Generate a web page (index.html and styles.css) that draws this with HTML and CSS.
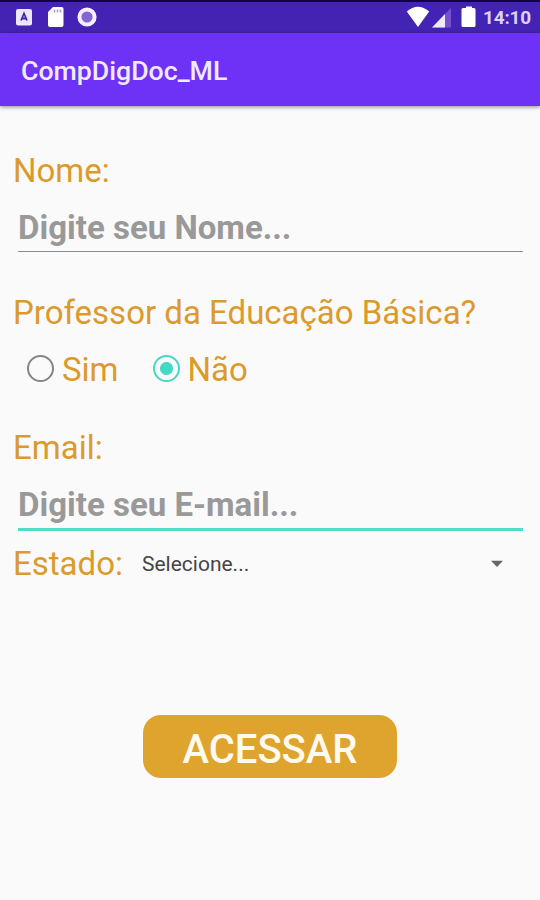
FILE: index.html
```html
<!DOCTYPE html>
<html lang="pt-BR">
<head>
<meta charset="utf-8">
<title>CompDigDoc_ML</title>
<link rel="stylesheet" href="styles.css">
</head>
<body>
<div class="status">
  <svg class="status-icons" width="90" height="30" viewBox="0 0 90 30">
    <rect x="2" y="7" width="16" height="16.500" rx="2" fill="#ece6fa"/>
    <path d="M7 18.500L10 11.500L13 18.500M8 16.500h4" fill="none" stroke="#4424b5" stroke-width="1.800"/>
    <path d="M39 5h8.500q2 0 2 2v16q0 2-2 2H36q-2 0-2-2V10z" fill="#fff"/>
    <path d="M40.500 7.500v3M43.500 7.500v3M46.500 7.500v3" stroke="#a99ad9" stroke-width="1.500"/>
    <circle cx="73" cy="15" r="7.600" fill="#8565d1" stroke="#f5f0ff" stroke-width="4"/>
  </svg>
  <svg class="status-icons" width="70" height="30" viewBox="0 0 70 30">
    <path d="M.8 9.500Q12 0 23.200 9.500L12 25z" fill="#fff"/>
    <path d="M45 6V25.500H26z" fill="#7850cf"/>
    <path d="M39 12V25.500H26z" fill="#efeafa"/>
    <path d="M58 6h2V4.500h6V6h2q1.500 0 1.500 1.500v16q0 1.500-1.500 1.500H57q-1.500 0-1.500-1.500v-16Q55.500 6 57 6z" fill="#fff"/>
  </svg>
  <span class="clock">14:10</span>
</div>
<header class="bar"><span class="title">CompDigDoc_ML</span></header>
<main class="form">
  <label class="label" for="nome">Nome:</label>
  <input class="field" id="nome" placeholder="Digite seu Nome...">
  <div class="label question">Professor da Educação Básica?</div>
  <div class="options">
    <div class="option"><span class="radio"></span><span class="sim">Sim</span></div>
    <div class="option"><span class="radio checked"></span><span class="nao">Não</span></div>
  </div>
  <label class="label email" for="email">Email:</label>
  <input class="field active" id="email" placeholder="Digite seu E-mail...">
  <div class="state">
    <span class="label estado">Estado:</span>
    <span class="selected">Selecione...</span>
    <svg class="arrow" width="14" height="8" viewBox="0 0 14 8"><path d="M1 .7h12L7 7z" fill="#666"/></svg>
  </div>
  <button class="submit"><span class="submit-text">ACESSAR</span></button>
</main>
</body>
</html>
```
FILE: styles.css
```css
* { box-sizing: border-box; }
body {
  margin: 0;
  height: 900px;
  overflow: hidden;
  background: #fafafa;
  font-family: Roboto, sans-serif;
  color: #dc9a2c;
}
.status {
  height: 33px;
  padding: 0 9px 0 14px;
  border-top: 2px solid #12023f;
  background: #4323b4;
  display: flex;
  align-items: flex-start;
}
.status-icons { display: block; flex: none; }
.status-icons + .status-icons { margin-left: 302px; }
.clock {
  margin-left: auto;
  font-size: 19px;
  line-height: 32px;
  font-weight: 700;
  letter-spacing: -0.2px;
  color: #ddd2f6;
  white-space: nowrap;
}
.bar {
  height: 73px;
  padding-left: 21px;
  background: #6d32f6;
  box-shadow: 0 1px 4px rgba(0, 0, 0, .45);
  display: flex;
  align-items: center;
}
.title { font-size: 26.7px; line-height: 32px; font-weight: 500; color: #f1eaff; margin-top: 3px; white-space: nowrap; }
.form { padding: 46px 17px 0 13px; display: flex; flex-direction: column; }
.label { font-size: 33px; line-height: 38px; white-space: nowrap; }
.field {
  height: 44px;
  margin: 18px 0 0 5px;
  padding: 0 0 5px;
  border: 0;
  border-bottom: 1px solid #8c8c8c;
  border-radius: 0;
  outline: 0;
  background: transparent;
  font: bold 33px/38px Roboto, sans-serif;
  color: #999;
}
.field::placeholder { color: #999; opacity: 1; }
.active { height: 46px; border-bottom: 3px solid #58dbc6; }
.question { margin-top: 42px; }
.options { display: flex; margin: 19px 0 0 14px; gap: 34px; font-size: 33px; line-height: 38px; }
.option { display: flex; align-items: center; gap: 8px; }
.radio { width: 27px; height: 27px; border: 2.5px solid #858585; border-radius: 50%; margin-top: -4px; flex: none; }
.checked { border-color: #43d9c3; background: radial-gradient(circle, #43d9c3 6px, transparent 7px); }
.email { margin-top: 40px; }
.state { display: flex; align-items: center; margin-top: 14px; }
.selected { margin-left: 19px; font-size: 21px; line-height: 26px; color: #444; }
.arrow { margin: 0 19px 0 auto; }
.submit {
  align-self: center;
  width: 254px;
  height: 63px;
  margin: 132px 0 0 4px;
  padding: 0;
  border: 0;
  border-radius: 18px;
  background: #dfa42d;
  color: #fffaf0;
  font: 500 40px/48px Roboto, sans-serif;
}
.submit-text { display: block; margin-top: 6px; white-space: nowrap; }
```
